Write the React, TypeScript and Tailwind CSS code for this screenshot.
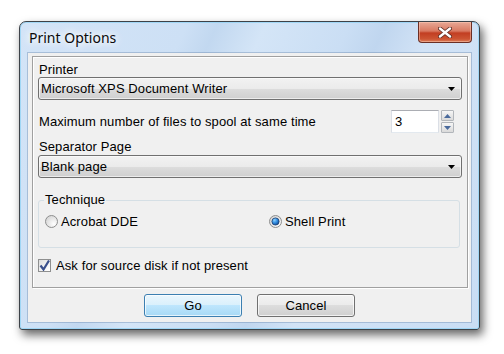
import React from "react";

function Combo({ value }: { value: string }) {
  return (
    <div className="ml-[5px] w-[424px] h-[23px] flex items-center justify-between rounded-[3px] border border-[#707070] bg-[linear-gradient(#f2f2f2_0%,#ebebeb_50%,#dddddd_50%,#cfcfcf_100%)] shadow-[inset_0_0_0_1px_rgba(255,255,255,0.6)] pl-[2px] pr-[6px]">
      <span>{value}</span>
      <svg width="7" height="4" viewBox="0 0 7 4">
        <path d="M0 0h7L3.5 4z" fill="#000" />
      </svg>
    </div>
  );
}

function SpinBtn({ up }: { up?: boolean }) {
  return (
    <div className="w-[13px] h-[11px] flex items-center justify-center border border-[#b2b6bb] rounded-[1px] bg-[linear-gradient(#f6f6f6_0%,#e8e8e8_50%,#dadada_100%)]">
      <svg width="7" height="4" viewBox="0 0 7 4">
        <path d={up ? "M0 4h7L3.5 0z" : "M0 0h7L3.5 4z"} fill="#4a6a9c" />
      </svg>
    </div>
  );
}

function Radio({ checked }: { checked?: boolean }) {
  return (
    <svg width="13" height="13" viewBox="0 0 13 13" className="shrink-0">
      <defs>
        <radialGradient id="rg" cx="0.7" cy="0.7" r="0.8">
          <stop offset="0" stopColor="#ffffff" />
          <stop offset="1" stopColor="#d4d4d4" />
        </radialGradient>
        <radialGradient id="rb" cx="0.35" cy="0.3" r="0.8">
          <stop offset="0" stopColor="#8fd3ff" />
          <stop offset="0.5" stopColor="#2f8be0" />
          <stop offset="1" stopColor="#0d3f86" />
        </radialGradient>
      </defs>
      <circle cx="6.5" cy="6.5" r="6" fill="url(#rg)" stroke="#8e8f8f" />
      {checked && <circle cx="6.5" cy="6.5" r="3.6" fill="url(#rb)" stroke="#1c3f70" strokeWidth="0.8" />}
    </svg>
  );
}

function Button({ label, primary }: { label: string; primary?: boolean }) {
  return (
    <div
      className={
        primary
          ? "w-[98px] h-[23px] flex items-center justify-center rounded-[3px] border border-[#3c7fb1] bg-[linear-gradient(#eaf6fd_0%,#d9f0fc_50%,#bee6fd_50%,#a7d9f5_100%)] shadow-[inset_0_0_0_1px_rgba(255,255,255,0.7)]"
          : "w-[98px] h-[23px] flex items-center justify-center rounded-[3px] border border-[#707070] bg-[linear-gradient(#f2f2f2_0%,#ebebeb_50%,#dddddd_50%,#cfcfcf_100%)] shadow-[inset_0_0_0_1px_rgba(255,255,255,0.7)]"
      }
    >
      {label}
    </div>
  );
}

export default function App() {
  return (
    <div className="w-[504px] h-[354px] bg-white pt-[21px] pl-[19px] font-['Liberation_Sans',Arial,sans-serif] text-[13px] leading-[16px] tracking-[0.1px] text-black">
      <div className="w-[461px] h-[309px] flex flex-col rounded-t-[7px] rounded-b-[3px] border border-[#3d4248] shadow-[3px_5px_10px_rgba(0,0,0,0.6),inset_0_0_0_1px_rgba(140,210,245,0.7)] bg-[linear-gradient(115deg,#d3e4f7_0%,#cde0f5_28%,#c2d8f0_33%,#d4e5f7_41%,#cadef4_55%,#c0d6ef_61%,#d2e3f6_69%,#c9ddf4_100%)]">
        <div className="h-[31px] flex items-start justify-between">
          <div className="pl-[9px] pt-[6px] font-['Noto_Sans',sans-serif] text-[14px] leading-[19px] tracking-normal text-[#0a0a0a] [text-shadow:0_0_6px_#fff,0_0_10px_#fff,0_0_14px_#fff]">
            Print Options
          </div>
          <div className="mr-[7px] w-[54px] h-[21px] flex items-center justify-center rounded-b-[4px] border border-t-0 border-[#6b2f25] bg-[linear-gradient(#e8a896_0%,#d97a62_45%,#c23e22_55%,#cc5533_85%,#dc7f5c_100%)] shadow-[inset_0_0_0_1px_rgba(255,210,190,0.45)]">
            <svg width="14" height="11" viewBox="0 0 14 11">
              <path d="M2 1.5l10 8M12 1.5l-10 8" stroke="#5a2a22" strokeWidth="4" strokeLinecap="round" />
              <path d="M2 1.5l10 8M12 1.5l-10 8" stroke="#ffffff" strokeWidth="2.4" strokeLinecap="round" />
            </svg>
          </div>
        </div>
        <div className="ml-[8px] w-[443px] h-[269px] bg-[#f0f0f0] shadow-[0_0_0_1px_rgba(90,120,160,0.35)] flex flex-col">
          <div className="mt-[3px] ml-[4px] w-[436px] h-[232px] border border-[#a0a0a0] shadow-[inset_1px_1px_0_#fff,1px_1px_0_#fff] flex flex-col">
            <div className="mt-[5px] pl-[6px] h-[15px]">Printer</div>
            <Combo value="Microsoft XPS Document Writer" />
            <div className="mt-[10px] flex items-center justify-between">
              <span className="pl-[6px]">Maximum number of files to spool at same time</span>
              <div className="flex items-center gap-[2px] mr-[13px]">
                <div className="w-[48px] h-[23px] flex items-center pl-[3px] bg-white border border-[#abadb3] border-x-[#dbdfe6] border-b-[#e3e9ef]">
                  3
                </div>
                <div className="flex flex-col gap-[1px]">
                  <SpinBtn up />
                  <SpinBtn />
                </div>
              </div>
            </div>
            <div className="mt-[6px] pl-[6px] h-[16px]">Separator Page</div>
            <Combo value="Blank page" />
            <fieldset className="mt-[15px] ml-[5px] w-[422px] border border-[#d5dfe5] rounded-[3px] pl-[6px] pb-[19px]">
              <legend className="-ml-[1px] px-[1px] leading-[14px]">Technique</legend>
              <div className="mt-[8px] h-[13px] flex items-center">
                <div className="w-[224px] flex items-center gap-[3px]">
                  <Radio />
                  <span>Acrobat DDE</span>
                </div>
                <div className="flex items-center gap-[3px]">
                  <Radio checked />
                  <span>Shell Print</span>
                </div>
              </div>
            </fieldset>
            <div className="mt-[11px] ml-[5px] h-[13px] flex items-center gap-[5px]">
              <div className="w-[13px] h-[13px] flex items-center justify-center border border-[#8e8f8f] bg-[linear-gradient(135deg,#dcdcdc_0%,#f4f4f4_60%,#ffffff_100%)]">
                <svg width="11" height="11" viewBox="0 0 11 11">
                  <path d="M1.5 5.5l3 4 5.5-9" fill="none" stroke="#3a4f8c" strokeWidth="2.2" />
                </svg>
              </div>
              <span>Ask for source disk if not present</span>
            </div>
          </div>
          <div className="mt-[6px] flex justify-center gap-[15px]">
            <Button label="Go" primary />
            <Button label="Cancel" />
          </div>
        </div>
      </div>
    </div>
  );
}
